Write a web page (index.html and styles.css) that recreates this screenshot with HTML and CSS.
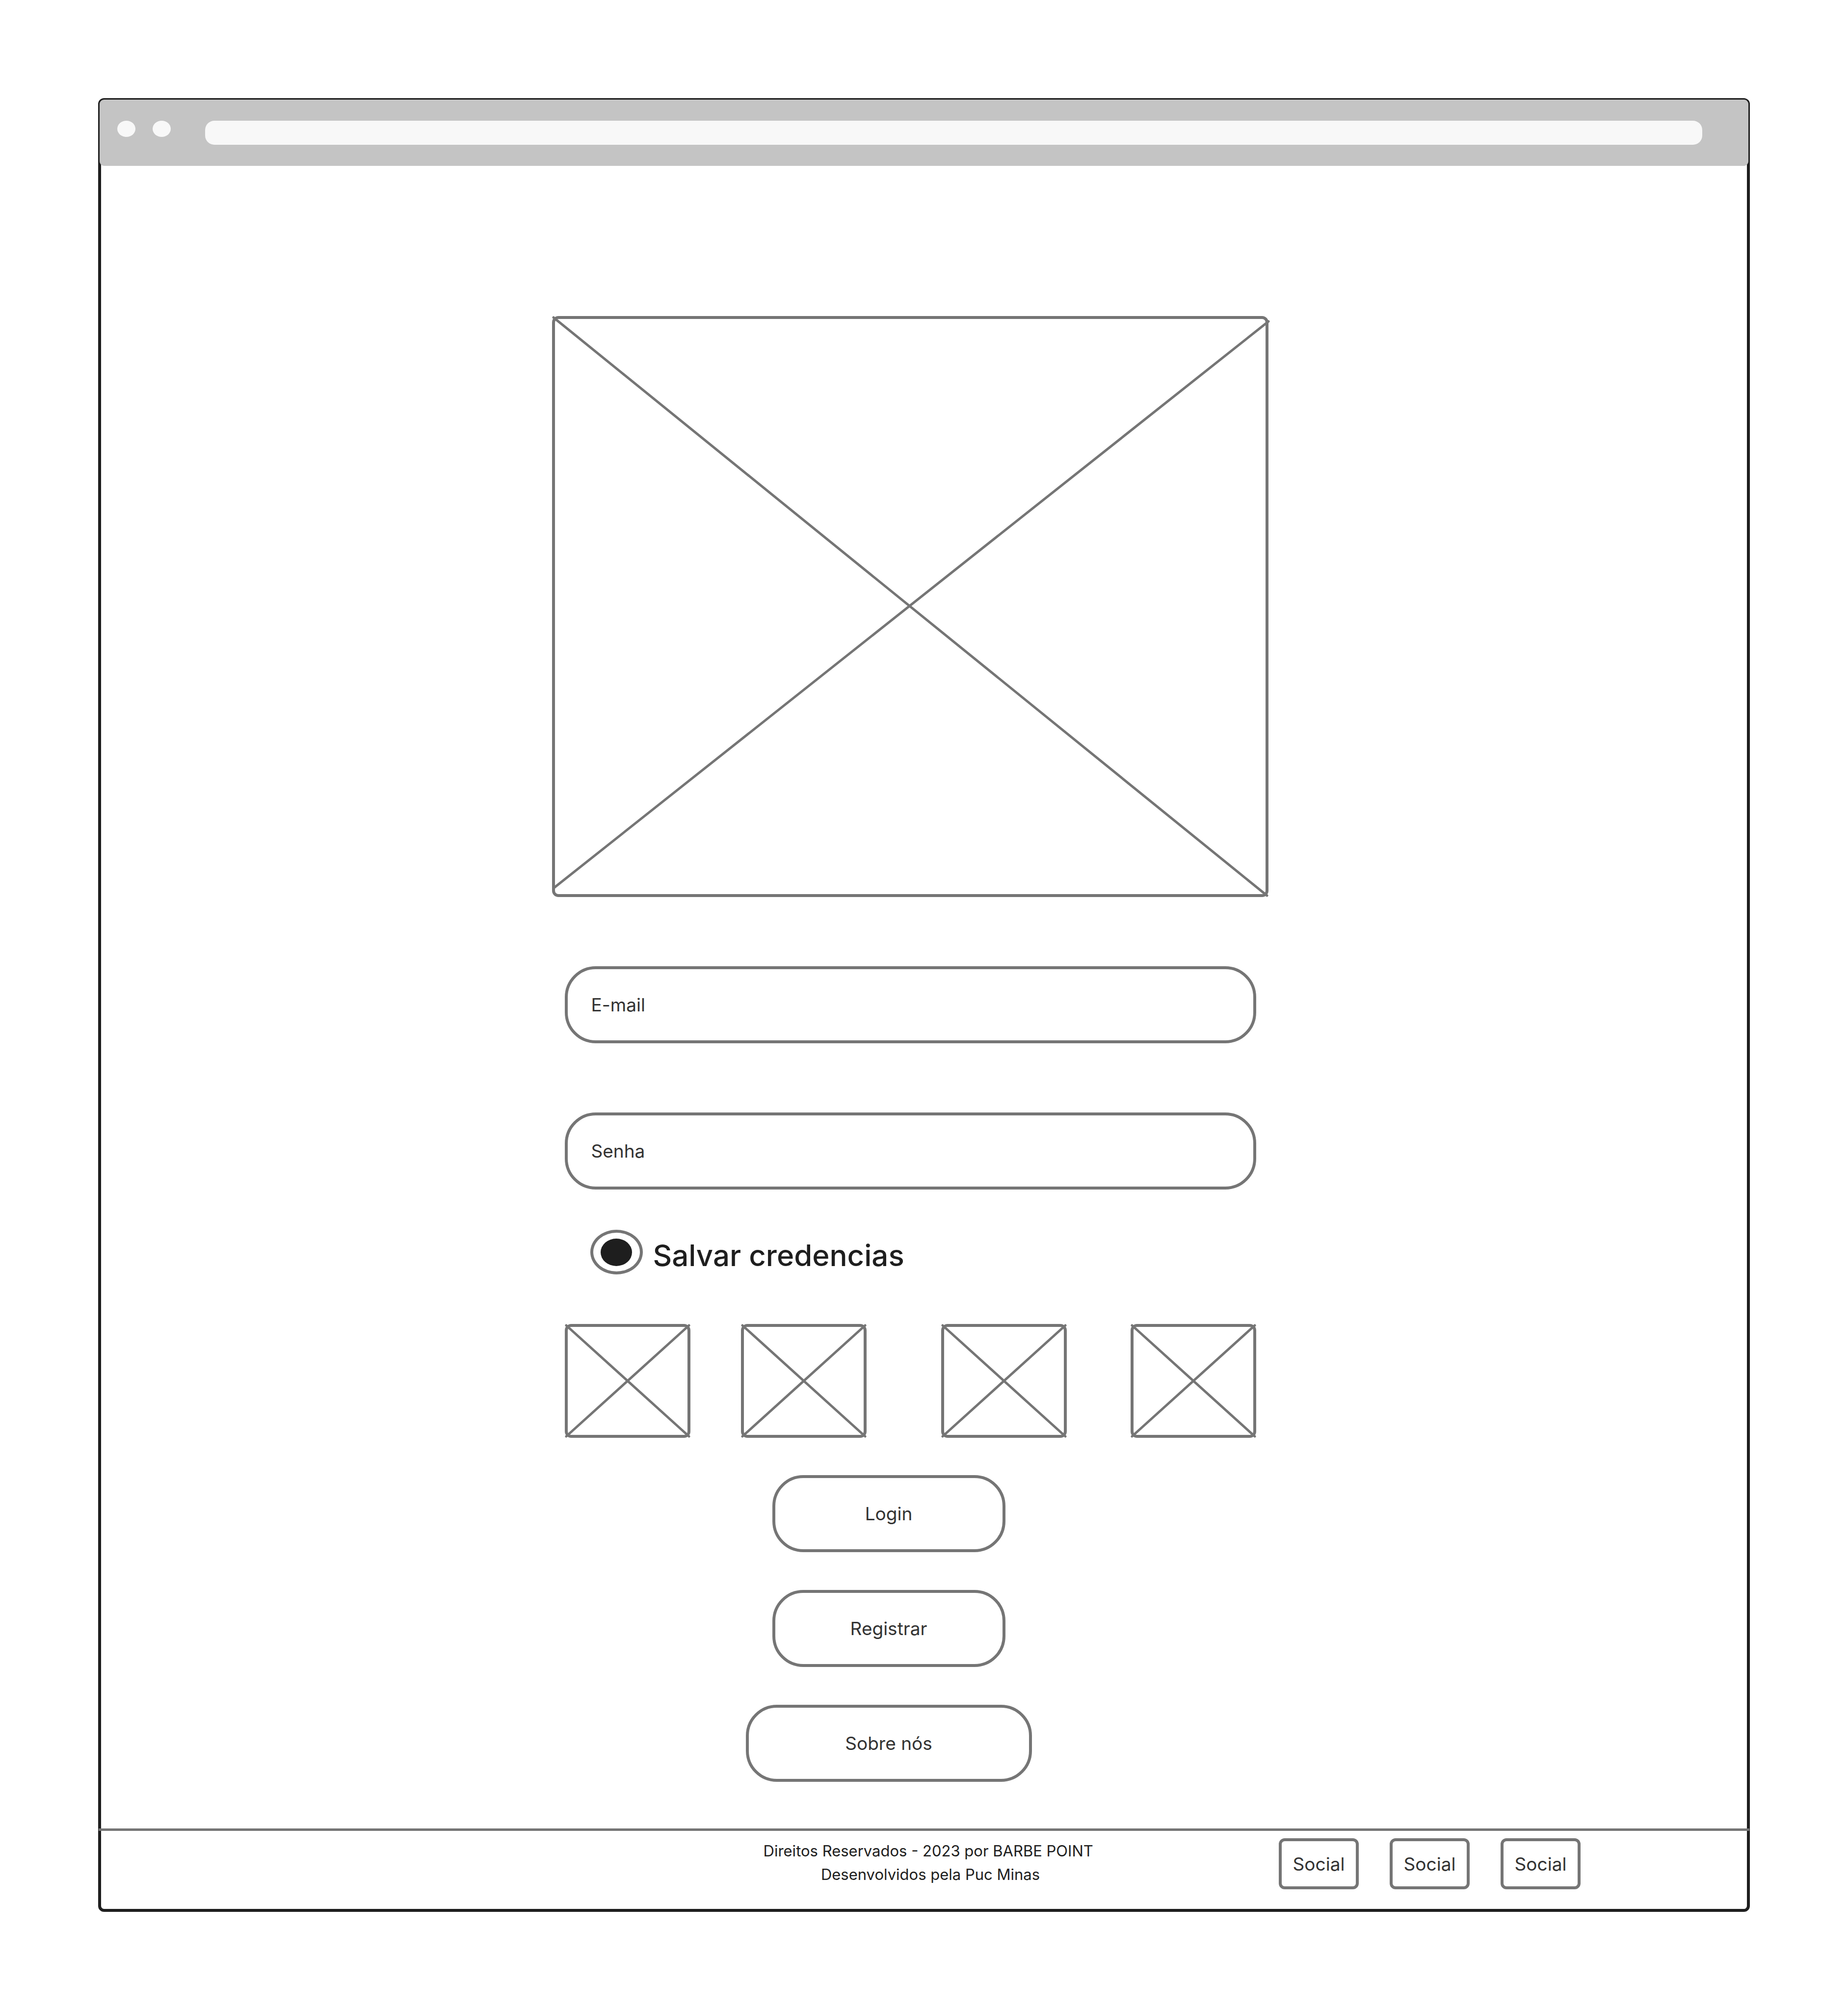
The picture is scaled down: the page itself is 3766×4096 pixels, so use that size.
FILE: index.html
```html
<!DOCTYPE html>
<html lang="pt-BR">
<head>
<meta charset="utf-8">
<meta name="viewport" content="width=device-width, initial-scale=1">
<title>Barbe Point - Login</title>
<link rel="stylesheet" href="styles.css">
</head>
<body>
<div class="browser">
  <header class="toolbar">
    <span class="toolbar-dot"></span>
    <span class="toolbar-dot"></span>
    <span class="toolbar-address"></span>
  </header>

  <main class="content">
    <svg class="hero" viewBox="0 0 1460 1184" role="img" aria-label="Logo">
      <rect class="box" x="3" y="3" width="1454" height="1178" rx="10"/>
      <path class="cross" d="M3 3L1457 1181M1460 11L3 1166"/>
    </svg>

    <form class="form">
      <input class="field" type="email" placeholder="E-mail" aria-label="E-mail">
      <input class="field" type="password" placeholder="Senha" aria-label="Senha">

      <div class="remember">
        <input class="remember-radio" type="radio" id="salvar" name="salvar" checked>
        <label class="remember-label" for="salvar">Salvar credencias</label>
      </div>

      <div class="thumbs">
        <svg class="thumb" viewBox="0 0 256 232" aria-hidden="true">
          <rect class="box" x="3" y="3" width="250" height="226" rx="10"/>
          <path class="cross" d="M3 3L253 229M253 3L3 229"/>
        </svg>
        <svg class="thumb" viewBox="0 0 256 232" aria-hidden="true">
          <rect class="box" x="3" y="3" width="250" height="226" rx="10"/>
          <path class="cross" d="M3 3L253 229M253 3L3 229"/>
        </svg>
        <svg class="thumb" viewBox="0 0 256 232" aria-hidden="true">
          <rect class="box" x="3" y="3" width="250" height="226" rx="10"/>
          <path class="cross" d="M3 3L253 229M253 3L3 229"/>
        </svg>
        <svg class="thumb" viewBox="0 0 256 232" aria-hidden="true">
          <rect class="box" x="3" y="3" width="250" height="226" rx="10"/>
          <path class="cross" d="M3 3L253 229M253 3L3 229"/>
        </svg>
      </div>

      <div class="actions">
        <button class="button" type="submit">Login</button>
        <button class="button" type="button">Registrar</button>
        <button class="button button-wide" type="button">Sobre nós</button>
      </div>
    </form>
  </main>

  <footer class="footer">
    <p class="credits">Direitos Reservados - 2023 por BARBE POINT&nbsp;<br>Desenvolvidos pela Puc Minas</p>
    <nav class="socials">
      <a class="social" href="#">Social</a>
      <a class="social" href="#">Social</a>
      <a class="social" href="#">Social</a>
    </nav>
  </footer>
</div>
</body>
</html>
```
FILE: styles.css
```css
:root {
  --ink: #1e1e1e;
  --text: #333333;
  --line: #757575;
}

* {
  box-sizing: border-box;
}

body {
  margin: 0;
  padding: 200px;
  background: #ffffff;
  color: var(--ink);
  font-family: Inter, "Liberation Sans", sans-serif;
}

.browser {
  border: 6px solid var(--ink);
  border-radius: 12px;
}

/* The toolbar covers the inner half of the window border. */
.toolbar {
  display: flex;
  align-items: flex-start;
  gap: 35px;
  margin: -3px -3px 0;
  padding: 43px 94px 43px 36px;
  border-radius: 9px;
  background: #c4c4c4;
}

.toolbar-dot {
  flex: none;
  width: 37px;
  height: 33px;
  border-radius: 50%;
  background: #f8f8f8;
}

.toolbar-address {
  flex: 1;
  height: 49px;
  margin-left: 35px;
  border-radius: 19px;
  background: #f8f8f8;
}

.content {
  display: flex;
  flex-direction: column;
  align-items: center;
  gap: 141px;
  padding: 306px 56px 95px 0;
}

.box,
.cross {
  fill: none;
  stroke: var(--line);
}

.box {
  stroke-width: 6px;
}

.cross {
  stroke-width: 5px;
  stroke-linecap: round;
}

.hero {
  display: block;
  width: 1460px;
  max-width: 100%;
  overflow: visible;
}

.form {
  display: flex;
  flex-direction: column;
  width: 1409px;
  max-width: 100%;
}

.field {
  width: 100%;
  height: 157px;
  padding: 0 48px;
  border: 6px solid var(--line);
  border-radius: 63px;
  background: transparent;
  color: var(--text);
  font: inherit;
  font-size: 37px;
}

.field + .field {
  margin-top: 141px;
}

.field::placeholder {
  color: var(--text);
  opacity: 1;
}

.remember {
  display: flex;
  align-items: center;
  gap: 21px;
  margin-top: 82px;
  padding-left: 52px;
}

.remember-radio {
  display: grid;
  flex: none;
  place-items: center;
  width: 107px;
  height: 91px;
  margin: 0;
  border: 6px solid var(--line);
  border-radius: 50%;
  appearance: none;
}

.remember-radio:checked::before {
  content: "";
  width: 64px;
  height: 56px;
  border-radius: 50%;
  background: var(--ink);
}

.remember-label {
  padding-top: 13px;
  font-size: 60px;
  font-weight: 500;
  line-height: 78px;
}

.thumbs {
  display: grid;
  grid-template-columns: 359fr 408fr 386fr 256fr;
  margin-top: 101px;
}

.thumb {
  display: block;
  width: 256px;
  max-width: 100%;
}

.actions {
  display: flex;
  flex-direction: column;
  align-items: center;
  gap: 77px;
  margin-top: 76px;
  padding-right: 88px;
}

.button {
  width: 475px;
  height: 157px;
  padding: 0;
  border: 6px solid var(--line);
  border-radius: 63px;
  background: transparent;
  color: var(--text);
  font: inherit;
  font-size: 37px;
}

.button-wide {
  width: 583px;
}

/* The rule on top of the footer runs across the window border. */
.footer {
  display: grid;
  grid-template-columns: 1fr auto 1fr;
  align-items: start;
  margin: 0 -5px;
  padding: 15px 0 40px 26px;
  border-top: 5px solid var(--line);
}

.credits {
  grid-column: 2;
  margin: 0;
  padding-top: 2px;
  font-size: 31px;
  line-height: 48px;
  text-align: center;
}

.socials {
  display: flex;
  justify-self: end;
  gap: 63px;
  margin-right: 344px;
}

.social {
  display: flex;
  align-items: center;
  justify-content: center;
  width: 163px;
  height: 104px;
  border: 6px solid var(--line);
  border-radius: 12px;
  color: var(--text);
  font-size: 37px;
  text-decoration: none;
}
```
